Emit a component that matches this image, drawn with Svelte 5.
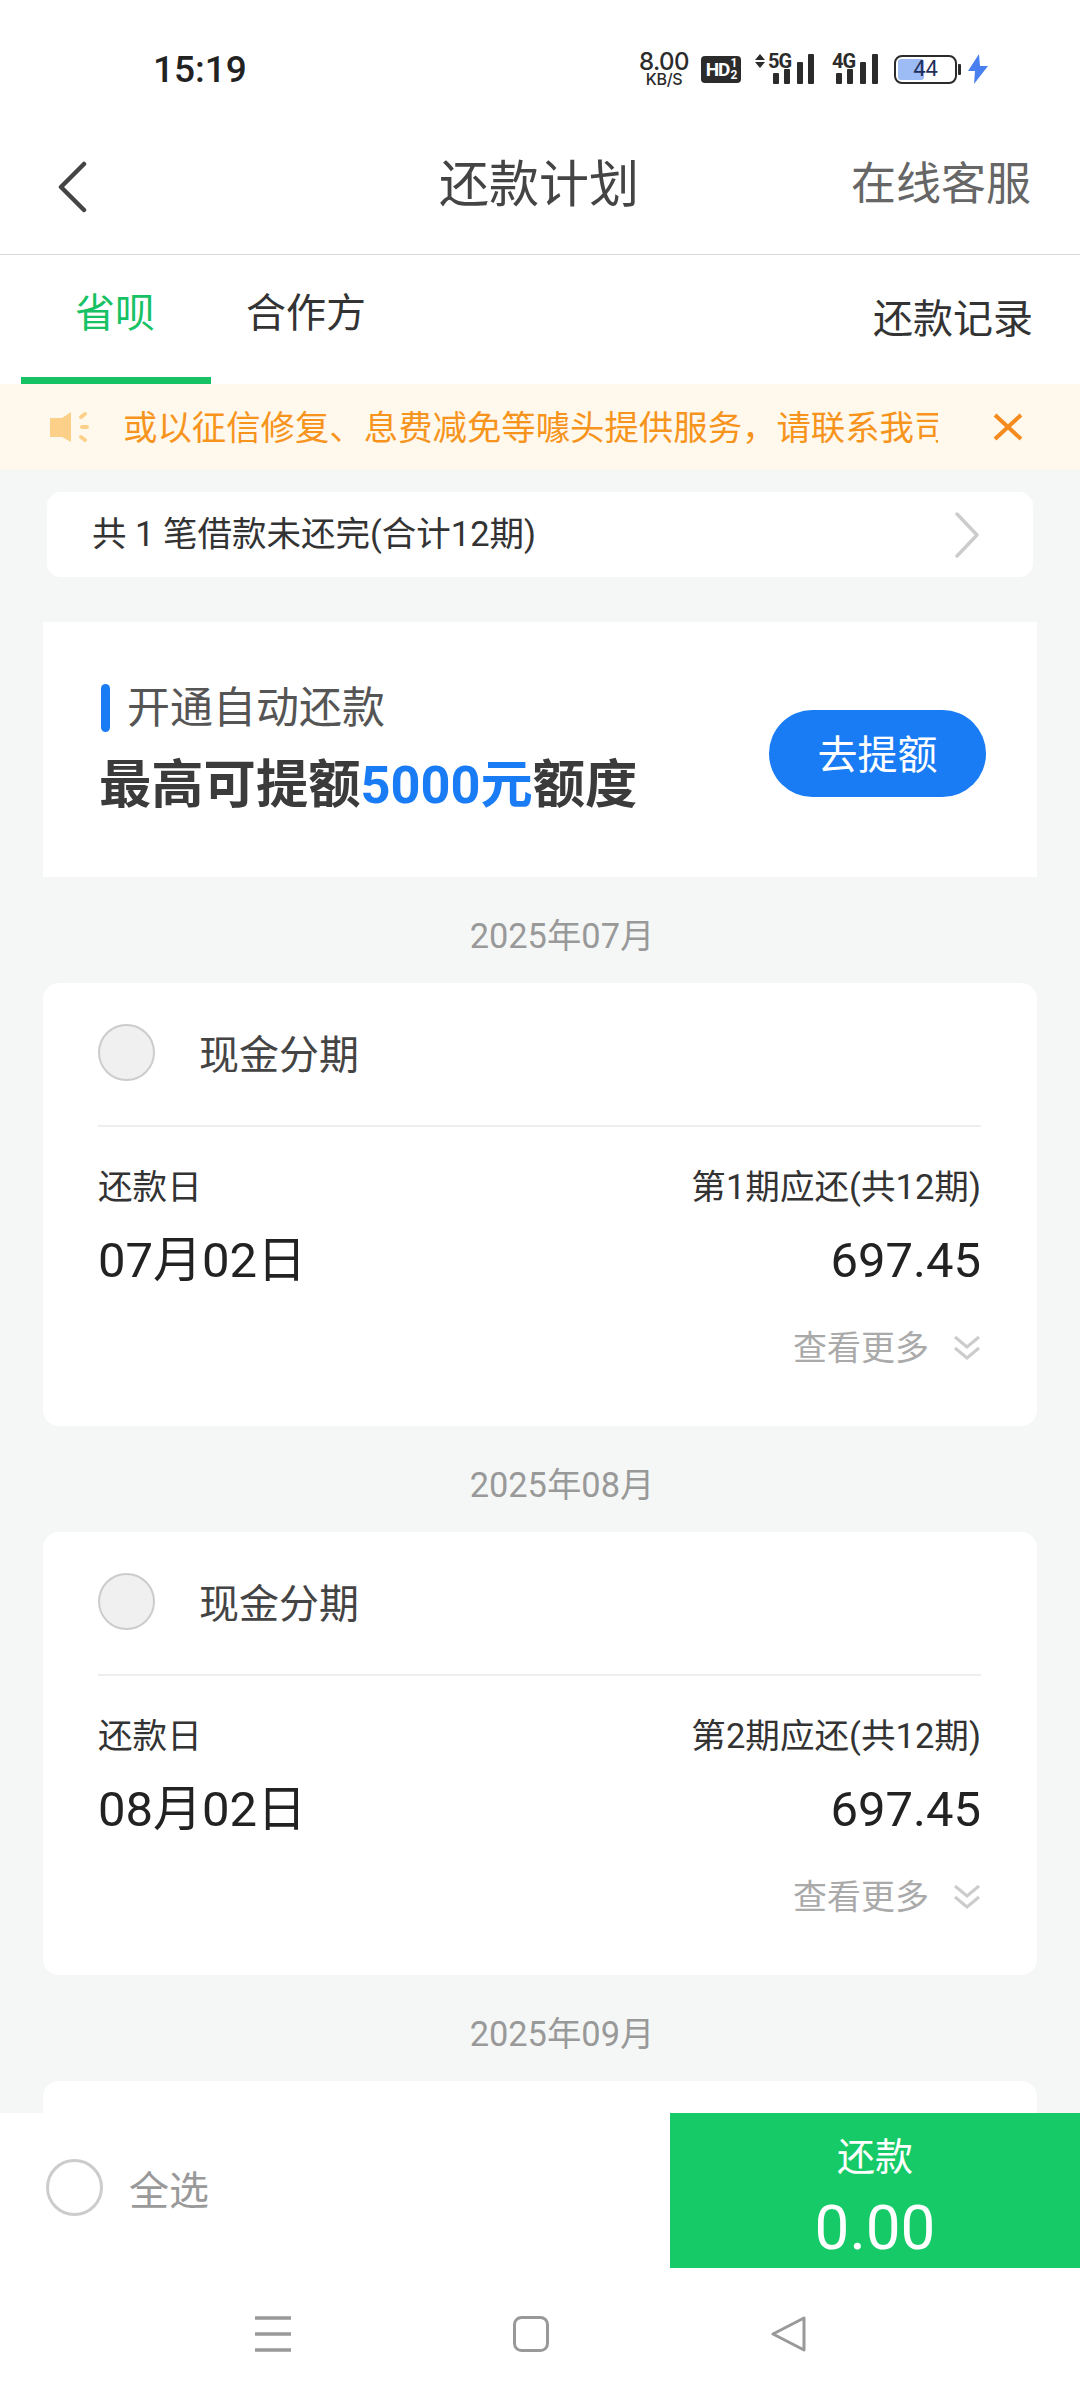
<script>
	const plans = [
		{ month: '2025年07月', no: 1, date: '07月02日', amount: '697.45' },
		{ month: '2025年08月', no: 2, date: '08月02日', amount: '697.45' },
		{ month: '2025年09月', no: 3, date: '09月02日', amount: '697.45' }
	];
</script>

<div class="page">
	<div class="status">
		<span class="time">15:19</span>
		<div class="status-right">
			<div class="speed"><b>8.00</b><small>KB/S</small></div>
			<div class="hd">HD<span class="hd-sub"><i>1</i><i>2</i></span></div>
			<svg class="sig sig5" viewBox="0 0 60 31" width="60" height="31">
				<path d="M0 6 5 0l5 6zM0 8h10l-5 6z" fill="#2b2b2b" />
				<text x="13" y="14" class="net">5G</text>
				<rect x="18" y="19" width="6" height="11" rx="1" fill="#2b2b2b" />
				<rect x="29" y="15" width="6" height="15" rx="1" fill="#2b2b2b" />
				<rect x="42" y="8" width="6" height="22" rx="1" fill="#2b2b2b" />
				<rect x="53" y="0" width="6" height="30" rx="1" fill="#2b2b2b" />
			</svg>
			<svg class="sig sig4" viewBox="0 0 46 31" width="46" height="31">
				<text x="0" y="14" class="net">4G</text>
				<rect x="4" y="19" width="6" height="11" rx="1" fill="#2b2b2b" />
				<rect x="15" y="15" width="6" height="15" rx="1" fill="#2b2b2b" />
				<rect x="28" y="8" width="6" height="22" rx="1" fill="#2b2b2b" />
				<rect x="40" y="0" width="6" height="30" rx="1" fill="#2b2b2b" />
			</svg>
			<div class="battery">
				<div class="level"></div>
				<span>44</span>
			</div>
			<div class="tip"></div>
			<svg class="bolt" viewBox="0 0 20 30" width="20" height="30">
				<path d="M11 0 0 17h7l-1 13 14-18h-8z" fill="#4a7ff0" />
			</svg>
		</div>
	</div>

	<header class="nav">
		<svg class="back" viewBox="0 0 32 52" width="32" height="52">
			<path d="M28 3 5 26l23 23" fill="none" stroke="#444" stroke-width="4.5" stroke-linecap="round" stroke-linejoin="round" />
		</svg>
		<h1>还款计划</h1>
		<span class="service">在线客服</span>
	</header>

	<div class="tabs">
		<div class="tab active">省呗</div>
		<div class="tab">合作方</div>
		<span class="records">还款记录</span>
	</div>

	<div class="notice">
		<svg class="horn" viewBox="0 0 42 32" width="42" height="32">
			<path d="M0 7h12L21 1v30l-9-5H0z" fill="#fdd08a" />
			<g stroke="#fdd08a" stroke-width="4" stroke-linecap="round">
				<path d="M31 6l4-3M32 16h5M31 26l4 3" />
			</g>
		</svg>
		<div class="notice-text">{'或以征信修复、息费减免等噱头提供服务\uFF0C请联系我司'}</div>
		<svg class="close" viewBox="0 0 30 28" width="30" height="28">
			<path d="M2 2l26 24M28 2 2 26" fill="none" stroke="#f58a1f" stroke-width="4" />
		</svg>
	</div>

	<main>
		<div class="summary">
			<span>共 1 笔借款未还完(合计12期)</span>
			<svg viewBox="0 0 24 46" width="24" height="46">
				<path d="M2 2l20 21L2 44" fill="none" stroke="#ccc" stroke-width="3.5" stroke-linecap="round" stroke-linejoin="round" />
			</svg>
		</div>

		<div class="promo">
			<div class="promo-text">
				<div class="promo-title"><i></i>开通自动还款</div>
				<div class="promo-main">最高可提额<em>5000元</em>额度</div>
			</div>
			<div class="promo-btn">去提额</div>
		</div>

		{#each plans as plan}
			<div class="month">{plan.month}</div>
			<section class="card">
				<div class="card-head">
					<span class="radio"></span>
					<span class="card-name">现金分期</span>
				</div>
				<div class="line">
					<span>还款日</span>
					<span>第{plan.no}期应还(共12期)</span>
				</div>
				<div class="line big">
					<span>{plan.date}</span>
					<span>{plan.amount}</span>
				</div>
				<div class="more">
					<span>查看更多</span>
					<svg viewBox="0 0 28 26" width="28" height="26">
						<path d="M2 2l12 10L26 2M2 13l12 10 12-10" fill="none" stroke="#ccc" stroke-width="3" />
					</svg>
				</div>
			</section>
		{/each}
	</main>

	<div class="bottom">
		<div class="select-all">
			<span class="radio hollow"></span>
			<span>全选</span>
		</div>
		<div class="pay">
			<span class="pay-label">还款</span>
			<span class="pay-amount">0.00</span>
		</div>
	</div>

	<div class="sysnav">
		<svg viewBox="0 0 36 36" width="36" height="36">
			<path d="M0 2h36M0 18h36M0 34h36" stroke="#999" stroke-width="3.5" />
		</svg>
		<svg viewBox="0 0 36 36" width="36" height="36">
			<rect x="1.5" y="1.5" width="33" height="33" rx="7" fill="none" stroke="#999" stroke-width="3" />
		</svg>
		<svg viewBox="0 0 36 36" width="36" height="36">
			<path d="M33 2v32L2 18z" fill="none" stroke="#999" stroke-width="3" stroke-linejoin="round" />
		</svg>
	</div>
</div>

<style>
	:global(body) {
		margin: 0;
		background: #fff;
	}

	.page {
		width: 1080px;
		height: 2400px;
		display: flex;
		flex-direction: column;
		overflow: hidden;
		background: #fff;
		color: #333;
		font-family: Roboto, "Noto Sans CJK SC", sans-serif;
	}

	.status {
		height: 130px;
		flex: none;
		display: flex;
		align-items: center;
		justify-content: space-between;
		padding: 8px 92px 0 153px;
		box-sizing: border-box;
	}

	.time {
		font-size: 37px;
		font-weight: 500;
		color: #222;
	}

	.status-right {
		display: flex;
		align-items: center;
		color: #2b2b2b;
	}

	.speed {
		width: 52px;
		display: flex;
		flex-direction: column;
		align-items: center;
		font-family: Inter, Roboto, sans-serif;
	}

	.speed b {
		font-size: 24px;
		line-height: 20px;
		font-weight: 500;
		letter-spacing: -0.5px;
	}

	.speed small {
		font-size: 16px;
		line-height: 15px;
		font-weight: 500;
		letter-spacing: -0.3px;
	}

	.hd {
		width: 40px;
		height: 27px;
		margin-left: 11px;
		border-radius: 4px;
		background: #2b2b2b;
		color: #fff;
		font-size: 19px;
		font-weight: 700;
		letter-spacing: -1px;
		display: flex;
		align-items: center;
		justify-content: center;
		line-height: 1;
	}

	.hd-sub {
		display: flex;
		flex-direction: column;
		margin-left: 1px;
	}

	.hd-sub i {
		font-style: normal;
		font-size: 12px;
		line-height: 12px;
	}

	.sig {
		overflow: visible;
	}

	.sig5 {
		margin-left: 14px;
	}

	.sig4 {
		margin-left: 17px;
	}

	.net {
		font-family: Roboto, sans-serif;
		font-size: 20px;
		font-weight: 700;
		letter-spacing: -1px;
		fill: #2b2b2b;
	}

	.battery {
		width: 63px;
		height: 29px;
		margin-left: 16px;
		box-sizing: border-box;
		border: 2.5px solid #2b2b2b;
		border-radius: 8px;
		position: relative;
		display: flex;
		align-items: center;
		justify-content: center;
	}

	.level {
		position: absolute;
		left: 2px;
		top: 2px;
		bottom: 2px;
		width: 44%;
		border-radius: 3px;
		background: #9dbcf5;
	}

	.battery span {
		position: relative;
		font-size: 22px;
		color: #1f2f5a;
		line-height: 1;
	}

	.tip {
		width: 3px;
		height: 11px;
		margin-left: 1px;
		background: #2b2b2b;
		border-radius: 1px;
	}

	.bolt {
		margin-left: 7px;
	}

	.nav {
		height: 125px;
		flex: none;
		box-sizing: border-box;
		border-bottom: 1px solid #d9d9d9;
		display: flex;
		align-items: flex-start;
		justify-content: space-between;
		position: relative;
		padding: 0 49px 0 56px;
	}

	.back {
		margin-top: 31px;
	}

	.nav h1 {
		position: absolute;
		left: 0;
		right: 0;
		top: 23px;
		margin: 0;
		text-align: center;
		font-size: 50px;
		line-height: 64px;
		font-weight: 400;
		color: #444;
		transform: translateX(-1px);
	}

	.service {
		margin-top: 28px;
		font-size: 45px;
		line-height: 53px;
		color: #666;
	}

	.tabs {
		height: 129px;
		flex: none;
		display: flex;
		align-items: flex-start;
		padding: 0 47px 0 21px;
		box-sizing: border-box;
	}

	.tab {
		width: 190px;
		height: 129px;
		box-sizing: border-box;
		padding-top: 32px;
		line-height: 54px;
		font-size: 40px;
		text-align: center;
		color: #333;
	}

	.tab.active {
		color: #16c264;
		border-bottom: 7px solid #16c264;
		text-indent: -2px;
	}

	.records {
		margin-left: auto;
		padding-top: 38px;
		line-height: 54px;
		font-size: 40px;
		color: #333;
	}

	.notice {
		height: 86px;
		flex: none;
		background: #fef9ec;
		display: flex;
		align-items: center;
		padding: 0 57px 0 50px;
		box-sizing: border-box;
	}

	.notice-text {
		width: 815px;
		margin: 2px 0 0 31px;
		overflow: hidden;
		white-space: nowrap;
		font-size: 34.4px;
		line-height: 50px;
		color: #f7941d;
	}

	.close {
		margin-left: auto;
	}

	main {
		flex: 1;
		min-height: 0;
		overflow: hidden;
		background: #f5f7f6;
		padding: 22px 43px 0;
	}

	.summary {
		height: 85px;
		margin: 0 4px;
		padding: 0 54px 0 45px;
		border-radius: 14px;
		background: #fff;
		display: flex;
		align-items: center;
		justify-content: space-between;
		font-size: 34.5px;
		color: #333;
	}

	.summary span {
		margin-bottom: 8px;
	}

	.promo {
		height: 255px;
		margin-top: 45px;
		padding: 56px 51px 0 58px;
		box-sizing: border-box;
		background: #fff;
		display: flex;
		align-items: flex-start;
		justify-content: space-between;
	}

	.promo-title {
		display: flex;
		align-items: center;
		font-size: 43px;
		line-height: 60px;
		color: #555;
	}

	.promo-title i {
		width: 9px;
		height: 48px;
		border-radius: 5px;
		background: #1a7cf5;
		margin-right: 17px;
	}

	.promo-main {
		margin: 9px 0 0 -2px;
		font-size: 52.3px;
		line-height: 76px;
		font-weight: 700;
		color: #3b3b3b;
		white-space: nowrap;
	}

	.promo-main em {
		font-style: normal;
		color: #1a7cf5;
	}

	.promo-btn {
		width: 217px;
		height: 87px;
		margin-top: 32px;
		padding-bottom: 4px;
		box-sizing: border-box;
		border-radius: 44px;
		background: #1a7cf5;
		color: #fff;
		font-size: 40px;
		display: flex;
		align-items: center;
		justify-content: center;
	}

	.month {
		height: 106px;
		padding: 40px 0 0 44px;
		box-sizing: border-box;
		line-height: 38px;
		text-align: center;
		font-size: 34.4px;
		color: #999;
	}

	.card {
		height: 443px;
		padding: 0 56px 0 55px;
		box-sizing: border-box;
		background: #fff;
		border-radius: 16px;
	}

	.card-head {
		height: 144px;
		display: flex;
		align-items: center;
		border-bottom: 2px solid #eee;
		padding-bottom: 4px;
		box-sizing: border-box;
	}

	.radio {
		width: 57px;
		height: 57px;
		flex: none;
		box-sizing: border-box;
		border-radius: 50%;
		border: 2px solid #ccc;
		background: #f0f0f0;
	}

	.radio.hollow {
		border-width: 3px;
		background: #fff;
	}

	.card-name {
		margin-left: 44px;
		font-size: 40px;
		color: #444;
	}

	.line {
		display: flex;
		justify-content: space-between;
		margin-top: 37px;
		font-size: 34.6px;
		line-height: 46px;
		color: #333;
	}

	.line.big {
		margin-top: 16px;
		font-size: 49px;
		line-height: 70px;
		color: #222;
	}

	.more {
		display: flex;
		align-items: center;
		justify-content: flex-end;
		gap: 24px;
		margin-top: 29px;
		font-size: 34px;
		line-height: 46px;
		color: #aaa;
	}

	.bottom {
		height: 155px;
		flex: none;
		display: flex;
		justify-content: space-between;
		background: #fff;
	}

	.select-all {
		display: flex;
		align-items: center;
		gap: 26px;
		padding: 0 0 6px 46px;
		font-size: 40px;
		color: #999;
	}

	.pay {
		width: 410px;
		background: #16cb67;
		color: #fff;
		display: flex;
		flex-direction: column;
		align-items: center;
	}

	.pay-label {
		margin-top: 19px;
		font-size: 38px;
		line-height: 50px;
	}

	.pay-amount {
		margin-top: 9px;
		font-size: 62px;
		line-height: 74px;
	}

	.sysnav {
		height: 132px;
		flex: none;
		display: flex;
		align-items: flex-start;
		justify-content: center;
		gap: 222px;
		padding: 48px 19px 0 0;
		box-sizing: border-box;
	}
</style>
